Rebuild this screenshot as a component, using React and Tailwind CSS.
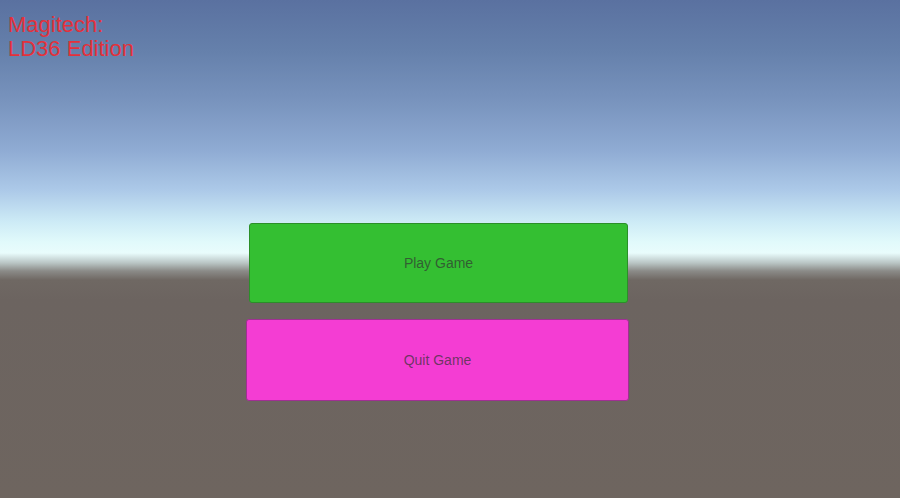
export default function App() {
  return (
    <div
      className="w-full h-[498px] overflow-hidden bg-[linear-gradient(to_bottom,#5a71a0_0px,#6580ab_50px,#7893bd_100px,#8fabd3_150px,#acc9e8_190px,#cdebf6_222px,#e1fafb_242px,#e9fcfc_253px,#b9c5c4_263px,#8b8b88_271px,#6f6863_280px,#6c6460_300px,#6e655f_498px)]"
      style={{ fontFamily: '"Liberation Sans", Arial, sans-serif' }}
    >
      <div className="pt-[13px] pl-[8px] text-[22px] leading-[24px] text-[#e3313b]">
        <div>Magitech:</div>
        <div>LD36 Edition</div>
      </div>

      <div className="mt-[162px] ml-[246px] flex flex-col items-start gap-[16px]">
        <button className="ml-[3px] w-[379px] h-[80px] rounded-[3px] border border-[#2b8f29] bg-[#34bf32] text-[14px] text-[#323232]/70 flex items-center justify-center">
          Play Game
        </button>
        <button className="w-[383px] h-[82px] rounded-[3px] border border-[#a02f93] bg-[#f43dd3] text-[14px] text-[#323232]/70 flex items-center justify-center">
          Quit Game
        </button>
      </div>
    </div>
  );
}
